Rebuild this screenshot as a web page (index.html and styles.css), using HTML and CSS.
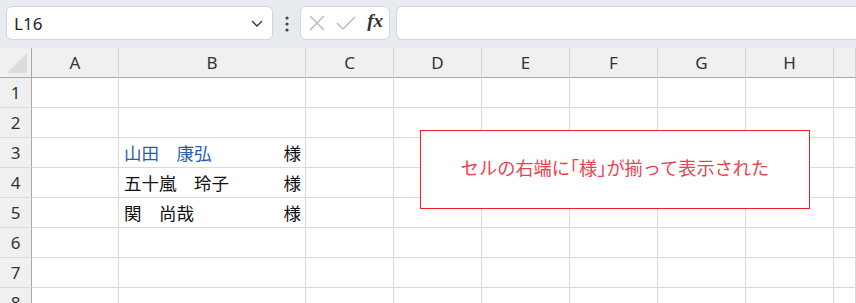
FILE: index.html
```html
<!DOCTYPE html>
<html lang="ja">
<head>
    <meta charset="UTF-8">
    <title>Excel - 様を右端に揃える</title>
    <link rel="stylesheet" href="styles.css">
</head>
<body>
    <div class="formula-bar">
        <div class="name-box">
            <span>L16</span>
            <svg class="chevron" width="14" height="14" viewBox="0 0 14 14"><path d="M2 5 L7 10 L12 5" fill="none" stroke="#333" stroke-width="1.3"/></svg>
        </div>
        <div class="dots">
            <svg width="6" height="18" viewBox="0 0 6 18"><circle cx="3" cy="3" r="1.6" fill="#444"/><circle cx="3" cy="9" r="1.6" fill="#444"/><circle cx="3" cy="15" r="1.6" fill="#444"/></svg>
        </div>
        <div class="fx-buttons">
            <svg width="18" height="18" viewBox="0 0 18 18"><path d="M2 2 L16 16 M16 2 L2 16" stroke="#bdbdbd" stroke-width="1.5"/></svg>
            <svg width="20" height="18" viewBox="0 0 20 18"><path d="M1 9 L7 15 L19 3" fill="none" stroke="#bdbdbd" stroke-width="1.5"/></svg>
            <span class="fx">fx</span>
        </div>
        <div class="formula-input"></div>
    </div>

    <div class="sheet">
        <div class="grid">
            <div class="corner"><div class="tri"></div></div>
            <div class="col-head">A</div>
            <div class="col-head">B</div>
            <div class="col-head">C</div>
            <div class="col-head">D</div>
            <div class="col-head">E</div>
            <div class="col-head">F</div>
            <div class="col-head">G</div>
            <div class="col-head">H</div>
            <div class="col-head"></div>
        </div>
        <div id="rows"></div>

        <div class="note">セルの右端に<span class="br">「</span>様<span class="br">」</span>が揃って表示された</div>
    </div>

    <script>
        // names placed in column B, rows 3-5
        const names = { 3: '山田　康弘', 4: '五十嵐　玲子', 5: '関　尚哉' };
        const rows = document.getElementById('rows');

        for (let r = 1; r <= 8; r++) {
            const row = document.createElement('div');
            row.classList.add('grid');
            let html = `<div class="row-head">${r}</div><div class="cell"></div>`;
            if (names[r]) {
                html += `<div class="cell name${r === 3 ? ' blue' : ''}"><span>${names[r]}</span><span class="sama">様</span></div>`;
            } else {
                html += '<div class="cell"></div>';
            }
            for (let c = 0; c < 7; c++) {
                html += '<div class="cell"></div>';
            }
            row.innerHTML = html;
            rows.appendChild(row);
        }
    </script>
</body>
</html>
```

FILE: styles.css
```css
body {
    margin: 0;
    width: 856px;
    height: 303px;
    overflow: hidden;
    background-color: #fff;
    font-family: "Noto Sans", "Noto Sans CJK JP", sans-serif;
    color: #222;
}
.formula-bar {
    display: flex;
    align-items: center;
    height: 48px;
    padding: 0 0 2px 6px;
    box-sizing: border-box;
    background-color: #e7eaee;
}
.name-box {
    display: flex;
    align-items: center;
    justify-content: space-between;
    width: 267px;
    height: 34px;
    box-sizing: border-box;
    padding: 0 8px 0 7px;
    background-color: #fff;
    border: 1px solid #d2d5d9;
    border-radius: 6px;
    font-size: 17px;
    color: #222;
}
.dots {
    display: flex;
    justify-content: center;
    width: 27px;
    padding-top: 2px;
}
.fx-buttons {
    display: flex;
    align-items: center;
    gap: 10px;
    width: 90px;
    height: 34px;
    box-sizing: border-box;
    padding: 0 6px 0 7px;
    background-color: #fff;
    border: 1px solid #d2d5d9;
    border-radius: 6px;
}
.fx {
    font-family: "Liberation Serif", serif;
    font-style: italic;
    font-weight: bold;
    font-size: 19px;
    color: #333;
    margin-left: auto;
    margin-top: -4px;
}
.formula-input {
    flex: 1;
    height: 34px;
    margin-left: 6px;
    background-color: #fff;
    border: 1px solid #d2d5d9;
    border-right: none;
    border-radius: 6px 0 0 6px;
    box-sizing: border-box;
}
.sheet {
    position: relative;
}
.grid {
    display: grid;
    grid-template-columns: 32px 87px 187px 88px 88px 88px 88px 88px 88px 22px;
    height: 30px;
}
.corner {
    background-color: #f0f0f0;
    border-right: 1px solid #a8a8a8;
    border-bottom: 1px solid #a8a8a8;
    position: relative;
}
.tri {
    position: absolute;
    right: 4px;
    bottom: 4px;
    width: 0;
    height: 0;
    border-left: 20px solid transparent;
    border-bottom: 20px solid #dcdcdc;
}
.col-head {
    display: flex;
    align-items: center;
    justify-content: center;
    background-color: #f0f0f0;
    border-right: 1px solid #d4d4d4;
    border-bottom: 1px solid #a8a8a8;
    font-size: 17px;
    color: #333;
}
.row-head {
    display: flex;
    align-items: center;
    justify-content: center;
    background-color: #f0f0f0;
    border-right: 1px solid #a8a8a8;
    border-bottom: 1px solid #dadada;
    font-size: 17px;
    color: #333;
}
.cell {
    border-right: 1px solid #dadada;
    border-bottom: 1px solid #dadada;
}
.name {
    display: flex;
    align-items: center;
    justify-content: space-between;
    padding: 0 4px 0 5px;
    font-family: "Noto Sans CJK JP", sans-serif;
    font-size: 17.5px;
    color: #111;
}
.name.blue span:first-child {
    color: #1f5fae;
}
.note {
    position: absolute;
    left: 420px;
    top: 82px;
    width: 390px;
    height: 79px;
    box-sizing: border-box;
    border: 1px solid #e8202a;
    background-color: #fff;
    display: flex;
    align-items: center;
    justify-content: center;
    padding-bottom: 6px;
    font-family: "Noto Sans CJK JP", sans-serif;
    font-size: 18.2px;
    color: #e8434c;
}
.note .br {
    font-feature-settings: "halt";
}
```
